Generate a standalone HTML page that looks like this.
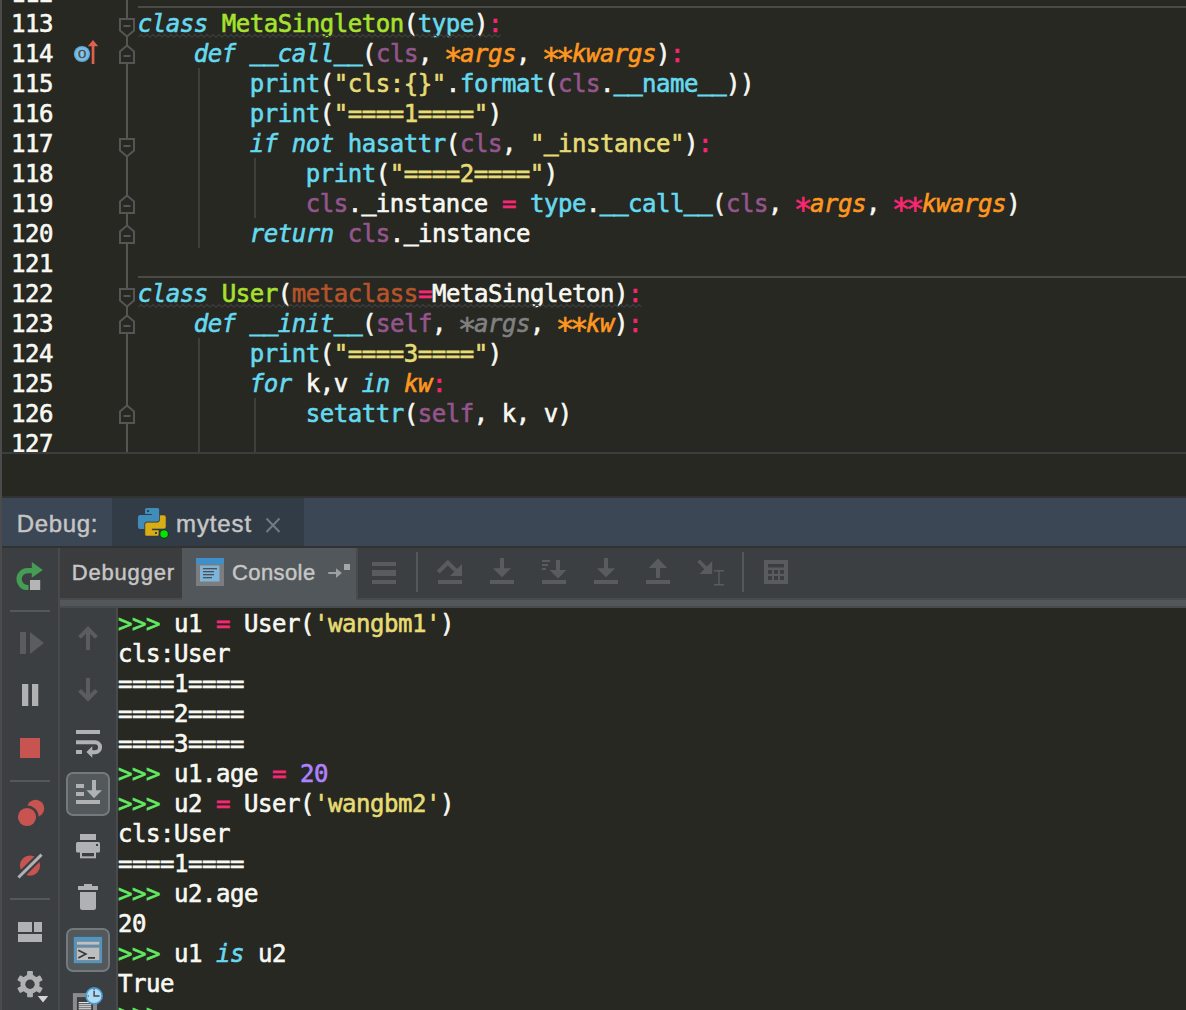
<!DOCTYPE html>
<html><head><meta charset="utf-8">
<style>
html,body{margin:0;padding:0;background:#272822;}
body{width:1186px;height:1010px;position:relative;overflow:hidden;font-family:"DejaVu Sans Mono","Liberation Mono",monospace;}
.abs{position:absolute;}
#editor{position:absolute;left:0;top:0;width:1186px;height:452px;background:#272822;overflow:hidden;}
.ln,.cl,.co{-webkit-text-stroke:0.6px;}
.ln,.cl{position:absolute;height:30px;line-height:30px;font-size:24px;letter-spacing:-0.4492px;white-space:pre;color:#f8f8f2;}
.ln{left:11px;}
.cl{left:137.8px;}
.k{color:#66d9ef;font-style:italic;}
.b{color:#66d9ef;}
.c{color:#a6e22e;}
.s{color:#94558d;}
.p{color:#fd971f;font-style:italic;}
.o{color:#f92672;}
.st{color:#e6db74;}
.n{color:#ae81ff;}
.m{color:#b5532b;}
.u{color:#808080;font-style:italic;}
.g{color:#62e862;}
.wave{}
.us{position:relative;top:-2.5px;-webkit-text-stroke:1.2px;}
.as{display:inline-block;transform-origin:7.2px 11px;transform:translateY(4.1px) scale(1.3);-webkit-text-stroke:0.45px;}

#console{position:absolute;left:118px;top:608px;width:1068px;height:402px;background:#272822;overflow:hidden;}
.co{position:absolute;left:0;height:30px;line-height:30px;font-size:24px;letter-spacing:-0.4492px;white-space:pre;color:#f8f8f2;}
.ui{font-family:"Liberation Sans","DejaVu Sans",sans-serif;color:#c6c6c6;position:absolute;white-space:pre;-webkit-text-stroke:0.45px;}
</style></head><body>
<div id="editor">
<div class="ln" style="top:-21px">112</div>
<div class="ln" style="top:9px">113</div>
<div class="cl" style="top:9px"><span class="wave"><span class="k">class</span> <span class="c">MetaSingleton</span>(<span class="b">type</span>)<span class="o">:</span></span></div>
<div class="ln" style="top:39px">114</div>
<div class="cl" style="top:39px">    <span class="k">def</span> <span class="k"><span class="us">__</span>call<span class="us">__</span></span>(<span class="s">cls</span>, <span class="p"><span class="as">*</span>args</span>, <span class="p"><span class="as">*</span><span class="as">*</span>kwargs</span>)<span class="o">:</span></div>
<div class="ln" style="top:69px">115</div>
<div class="cl" style="top:69px">        <span class="b">print</span>(<span class="st">&quot;cls:{}&quot;</span>.<span class="b">format</span>(<span class="s">cls</span>.<span class="b"><span class="us">__</span>name<span class="us">__</span></span>))</div>
<div class="ln" style="top:99px">116</div>
<div class="cl" style="top:99px">        <span class="b">print</span>(<span class="st">&quot;====1====&quot;</span>)</div>
<div class="ln" style="top:129px">117</div>
<div class="cl" style="top:129px">        <span class="k">if not</span> <span class="b">hasattr</span>(<span class="s">cls</span>, <span class="st">&quot;<span class="us">_</span>instance&quot;</span>)<span class="o">:</span></div>
<div class="ln" style="top:159px">118</div>
<div class="cl" style="top:159px">            <span class="b">print</span>(<span class="st">&quot;====2====&quot;</span>)</div>
<div class="ln" style="top:189px">119</div>
<div class="cl" style="top:189px">            <span class="s">cls</span>.<span class="us">_</span>instance <span class="o">=</span> <span class="b">type</span>.<span class="b"><span class="us">__</span>call<span class="us">__</span></span>(<span class="s">cls</span>, <span class="o"><span class="as">*</span></span><span class="p">args</span>, <span class="o"><span class="as">*</span><span class="as">*</span></span><span class="p">kwargs</span>)</div>
<div class="ln" style="top:219px">120</div>
<div class="cl" style="top:219px">        <span class="k">return</span> <span class="s">cls</span>.<span class="us">_</span>instance</div>
<div class="ln" style="top:249px">121</div>
<div class="ln" style="top:279px">122</div>
<div class="cl" style="top:279px"><span class="wave"><span class="k">class</span> <span class="c">User</span>(<span class="m">metaclass</span><span class="o">=</span>MetaSingleton)<span class="o">:</span></span></div>
<div class="ln" style="top:309px">123</div>
<div class="cl" style="top:309px">    <span class="k">def</span> <span class="k"><span class="us">__</span>init<span class="us">__</span></span>(<span class="s">self</span>, <span class="u"><span class="as">*</span>args</span>, <span class="p"><span class="as">*</span><span class="as">*</span>kw</span>)<span class="o">:</span></div>
<div class="ln" style="top:339px">124</div>
<div class="cl" style="top:339px">        <span class="b">print</span>(<span class="st">&quot;====3====&quot;</span>)</div>
<div class="ln" style="top:369px">125</div>
<div class="cl" style="top:369px">        <span class="k">for</span> k,v <span class="k">in</span> <span class="p">kw</span><span class="o">:</span></div>
<div class="ln" style="top:399px">126</div>
<div class="cl" style="top:399px">            <span class="b">setattr</span>(<span class="s">self</span>, k, v)</div>
<div class="ln" style="top:429px">127</div>
<div class="abs" style="left:138px;top:6px;width:1048px;height:2px;background:#4a4b48"></div>
<div class="abs" style="left:138px;top:276px;width:1048px;height:2px;background:#4a4b48"></div>
<div class="abs" style="left:126px;top:0;width:2px;height:452px;background:#55564f"></div>
<div class="abs" style="left:198px;top:68px;width:2px;height:180px;background:#403f3b"></div>
<div class="abs" style="left:254px;top:158px;width:2px;height:60px;background:#403f3b"></div>
<div class="abs" style="left:198px;top:338px;width:2px;height:114px;background:#403f3b"></div>
<div class="abs" style="left:254px;top:398px;width:2px;height:54px;background:#403f3b"></div>
<svg class="abs" style="left:138px;top:33px" width="364" height="6" viewBox="0 0 364 6"><polyline points="0,4.3 3,1.4 6,4.3 9,1.4 12,4.3 15,1.4 18,4.3 21,1.4 24,4.3 27,1.4 30,4.3 33,1.4 36,4.3 39,1.4 42,4.3 45,1.4 48,4.3 51,1.4 54,4.3 57,1.4 60,4.3 63,1.4 66,4.3 69,1.4 72,4.3 75,1.4 78,4.3 81,1.4 84,4.3 87,1.4 90,4.3 93,1.4 96,4.3 99,1.4 102,4.3 105,1.4 108,4.3 111,1.4 114,4.3 117,1.4 120,4.3 123,1.4 126,4.3 129,1.4 132,4.3 135,1.4 138,4.3 141,1.4 144,4.3 147,1.4 150,4.3 153,1.4 156,4.3 159,1.4 162,4.3 165,1.4 168,4.3 171,1.4 174,4.3 177,1.4 180,4.3 183,1.4 186,4.3 189,1.4 192,4.3 195,1.4 198,4.3 201,1.4 204,4.3 207,1.4 210,4.3 213,1.4 216,4.3 219,1.4 222,4.3 225,1.4 228,4.3 231,1.4 234,4.3 237,1.4 240,4.3 243,1.4 246,4.3 249,1.4 252,4.3 255,1.4 258,4.3 261,1.4 264,4.3 267,1.4 270,4.3 273,1.4 276,4.3 279,1.4 282,4.3 285,1.4 288,4.3 291,1.4 294,4.3 297,1.4 300,4.3 303,1.4 306,4.3 309,1.4 312,4.3 315,1.4 318,4.3 321,1.4 324,4.3 327,1.4 330,4.3 333,1.4 336,4.3 339,1.4 342,4.3 345,1.4 348,4.3 351,1.4 354,4.3 357,1.4 360,4.3 363,1.4" fill="none" stroke="#3a3b3c" stroke-width="1.25"/></svg>
<svg class="abs" style="left:138px;top:303px" width="504" height="6" viewBox="0 0 504 6"><polyline points="0,4.3 3,1.4 6,4.3 9,1.4 12,4.3 15,1.4 18,4.3 21,1.4 24,4.3 27,1.4 30,4.3 33,1.4 36,4.3 39,1.4 42,4.3 45,1.4 48,4.3 51,1.4 54,4.3 57,1.4 60,4.3 63,1.4 66,4.3 69,1.4 72,4.3 75,1.4 78,4.3 81,1.4 84,4.3 87,1.4 90,4.3 93,1.4 96,4.3 99,1.4 102,4.3 105,1.4 108,4.3 111,1.4 114,4.3 117,1.4 120,4.3 123,1.4 126,4.3 129,1.4 132,4.3 135,1.4 138,4.3 141,1.4 144,4.3 147,1.4 150,4.3 153,1.4 156,4.3 159,1.4 162,4.3 165,1.4 168,4.3 171,1.4 174,4.3 177,1.4 180,4.3 183,1.4 186,4.3 189,1.4 192,4.3 195,1.4 198,4.3 201,1.4 204,4.3 207,1.4 210,4.3 213,1.4 216,4.3 219,1.4 222,4.3 225,1.4 228,4.3 231,1.4 234,4.3 237,1.4 240,4.3 243,1.4 246,4.3 249,1.4 252,4.3 255,1.4 258,4.3 261,1.4 264,4.3 267,1.4 270,4.3 273,1.4 276,4.3 279,1.4 282,4.3 285,1.4 288,4.3 291,1.4 294,4.3 297,1.4 300,4.3 303,1.4 306,4.3 309,1.4 312,4.3 315,1.4 318,4.3 321,1.4 324,4.3 327,1.4 330,4.3 333,1.4 336,4.3 339,1.4 342,4.3 345,1.4 348,4.3 351,1.4 354,4.3 357,1.4 360,4.3 363,1.4 366,4.3 369,1.4 372,4.3 375,1.4 378,4.3 381,1.4 384,4.3 387,1.4 390,4.3 393,1.4 396,4.3 399,1.4 402,4.3 405,1.4 408,4.3 411,1.4 414,4.3 417,1.4 420,4.3 423,1.4 426,4.3 429,1.4 432,4.3 435,1.4 438,4.3 441,1.4 444,4.3 447,1.4 450,4.3 453,1.4 456,4.3 459,1.4 462,4.3 465,1.4 468,4.3 471,1.4 474,4.3 477,1.4 480,4.3 483,1.4 486,4.3 489,1.4 492,4.3 495,1.4 498,4.3 501,1.4 504,4.3" fill="none" stroke="#3a3b3c" stroke-width="1.25"/></svg>
</div>
<div class="abs" style="left:0;top:0;width:2px;height:1010px;background:#4b4b4b"></div>
<div class="abs" style="left:2px;top:452px;width:1184px;height:2px;background:#3b3d3f"></div>
<div class="abs" style="left:2px;top:496px;width:1184px;height:2px;background:#323232"></div>
<div class="abs" style="left:2px;top:498px;width:1184px;height:48px;background:#3c4756"></div>
<div class="abs" style="left:112px;top:498px;width:192px;height:48px;background:#323c47"></div>
<div class="abs" style="left:2px;top:546px;width:1184px;height:2px;background:#323232"></div>
<div class="abs" style="left:2px;top:548px;width:1184px;height:462px;background:#3c3f41"></div>
<div class="abs" style="left:58px;top:548px;width:2px;height:462px;background:#494a4b"></div>
<div class="abs" style="left:60px;top:548px;width:122px;height:50px;background:#3b3c3e"></div>
<div class="abs" style="left:60px;top:598px;width:1126px;height:2px;background:#494a4b"></div>
<div class="abs" style="left:60px;top:600px;width:1126px;height:6px;background:#51575a"></div>
<div class="abs" style="left:182px;top:548px;width:174px;height:52px;background:#51575a"></div>
<div class="abs" style="left:356px;top:548px;width:2px;height:50px;background:#494a4b"></div>
<div class="abs" style="left:60px;top:606px;width:1126px;height:2px;background:#494a4b"></div>
<div class="abs" style="left:116px;top:608px;width:2px;height:402px;background:#494a4b"></div>
<div class="ui" style="left:16.800px;top:508.500px;font-size:24px;line-height:30px;letter-spacing:0.650px">Debug:</div>
<div class="ui" style="left:176px;top:508.500px;font-size:24px;line-height:30px;letter-spacing:0.900px">mytest</div>
<div class="ui" style="left:71.800px;top:557.500px;font-size:22px;line-height:30px;letter-spacing:0.800px">Debugger</div>
<div class="ui" style="left:232px;top:557.700px;font-size:22px;line-height:30px;letter-spacing:0.400px">Console</div>

<div id="console">
<div class="co" style="top:1px"><span class="g">&gt;&gt;&gt;</span> u1 <span class="o">=</span> User(<span class="st">'wangbm1'</span>)</div>
<div class="co" style="top:31px">cls:User</div>
<div class="co" style="top:61px">====1====</div>
<div class="co" style="top:91px">====2====</div>
<div class="co" style="top:121px">====3====</div>
<div class="co" style="top:151px"><span class="g">&gt;&gt;&gt;</span> u1.age <span class="o">=</span> <span class="n">20</span></div>
<div class="co" style="top:181px"><span class="g">&gt;&gt;&gt;</span> u2 <span class="o">=</span> User(<span class="st">'wangbm2'</span>)</div>
<div class="co" style="top:211px">cls:User</div>
<div class="co" style="top:241px">====1====</div>
<div class="co" style="top:271px"><span class="g">&gt;&gt;&gt;</span> u2.age</div>
<div class="co" style="top:301px">20</div>
<div class="co" style="top:331px"><span class="g">&gt;&gt;&gt;</span> u1 <span class="k">is</span> u2</div>
<div class="co" style="top:361px">True</div>
<div class="co" style="top:391px"><span class="g">&gt;&gt;&gt;</span></div>
</div>
<svg class="abs" style="left:0;top:0" width="1186" height="1010" viewBox="0 0 1186 1010">
<defs>
<radialGradient id="og" cx="50%" cy="50%" r="50%"><stop offset="0" stop-color="#8accf0"/><stop offset="0.7" stop-color="#79bde6"/><stop offset="1" stop-color="#5a9fd0"/></radialGradient>
</defs>
<!-- fold markers -->
<g fill="#272822" stroke="#555555" stroke-width="2">
<path d="M120 19H134V30.5L127 36.5L120 30.5Z"/>
<path d="M127 45.5L134 51.5V63H120V51.5Z"/>
<path d="M120 139H134V150.5L127 156.5L120 150.5Z"/>
<path d="M127 195.5L134 201.5V213H120V201.5Z"/>
<path d="M127 225.5L134 231.5V243H120V231.5Z"/>
<path d="M120 289H134V300.5L127 306.5L120 300.5Z"/>
<path d="M127 315.5L134 321.5V333H120V321.5Z"/>
<path d="M127 405.5L134 411.5V423H120V411.5Z"/>
</g>
<g fill="#555555">
<rect x="123.5" y="25" width="7" height="2"/><rect x="123.5" y="55" width="7" height="2"/>
<rect x="123.5" y="145" width="7" height="2"/><rect x="123.5" y="205" width="7" height="2"/>
<rect x="123.5" y="235" width="7" height="2"/><rect x="123.5" y="295" width="7" height="2"/>
<rect x="123.5" y="325" width="7" height="2"/><rect x="123.5" y="415" width="7" height="2"/>
</g>
<!-- override gutter icon -->
<circle cx="82" cy="54" r="8.1" fill="url(#og)"/>
<text x="82" y="58.200" text-anchor="middle" font-family="Liberation Serif,serif" font-size="17.500" fill="#4d4f52" stroke="#4d4f52" stroke-width="0.300">o</text>
<path d="M93 40L98.2 46.2H94.4V64H91.7V46.2H87.8Z" fill="#e0604f"/>
<!-- python icon -->
<g transform="translate(132 502) scale(0.03962)">
<path id="pyh" d="M330 190Q330 150 370 150H645Q685 150 685 190V440Q685 500 625 500H370Q315 500 315 555V680H205Q150 680 150 625V385Q150 330 205 330H500V306H330Z" fill="#408db9"/>
<path d="M330 190Q330 150 370 150H645Q685 150 685 190V440Q685 500 625 500H370Q315 500 315 555V680H205Q150 680 150 625V385Q150 330 205 330H500V306H330Z" fill="#d9ad15" stroke="#2a3440" stroke-width="14" transform="rotate(180 505 505)"/>
<rect x="380" y="205" width="50" height="46" fill="#2f3942"/>
<rect x="580" y="759" width="50" height="46" fill="#2f3942"/>
<circle cx="812" cy="812" r="112" fill="#1c2a1c"/>
<circle cx="810" cy="808" r="96" fill="#00e600"/>
</g>
<!-- tab close x -->
<path d="M266.500 518.500L279.500 532M279.500 518.500L266.500 532" stroke="#717b86" stroke-width="2" fill="none"/>
<!-- console tab icon -->
<rect x="196" y="558" width="28" height="28" fill="#7b7d7f"/>
<rect x="196" y="558" width="28" height="6" fill="#3f8fcb"/>
<rect x="200" y="565.500" width="19.500" height="16" fill="#7db4da"/>
<g fill="#4b5157"><rect x="203" y="568" width="14" height="1.300"/><rect x="203" y="571" width="11" height="1.300"/><rect x="203" y="574" width="11" height="1.300"/><rect x="203" y="577" width="9" height="1.300"/></g>
<!-- pin -->
<path d="M328.300 571.900H336V568.200L341.900 573L336 577.900V574.100H328.300Z" fill="#9d9fa0"/>
<rect x="344" y="564" width="6" height="6" fill="#a4a6a8"/>
<!-- toolbar (disabled) icons -->
<g fill="#5a5b5c">
<rect x="372" y="562" width="24" height="4"/><rect x="372" y="570" width="24" height="6"/><rect x="372" y="580" width="24" height="4"/>
<rect x="416" y="552" width="2" height="40" fill="#555759"/>
<rect x="742" y="552" width="2" height="40" fill="#555759"/>
<!-- show exec point -->
<rect x="438" y="580" width="24" height="4"/>
<path d="M438.300 572L447.800 562.500L457.500 572.200" fill="none" stroke="#5a5b5c" stroke-width="4"/>
<path d="M462 564V576H450Z"/>
<!-- step into -->
<rect x="490" y="580" width="24" height="4"/>
<path d="M500 558H504V568.200H511.200L502 577.200L492.800 568.200H500Z"/>
<!-- step into my code -->
<rect x="542" y="580" width="24" height="4"/>
<path d="M556 560H560V570H566.500L558 578.400L549.500 570H556Z"/>
<rect x="542" y="560" width="8" height="2"/><rect x="542" y="564" width="6" height="2"/><rect x="542" y="568" width="4" height="2"/>
<!-- force step into -->
<rect x="594" y="580" width="24" height="4"/>
<path d="M604 558H608V568.200H615.200L606 577.200L596.800 568.200H604Z"/>
<!-- step out -->
<rect x="646" y="580" width="24" height="4"/>
<path d="M658 558.600L667.300 568H660V578H656V568H648.700Z"/>
<!-- run to cursor -->
<path d="M698.500 560.800L708 570.300" fill="none" stroke="#5a5b5c" stroke-width="3.600"/>
<path d="M712.200 561.300V574H699.500Z"/>
<path d="M714 570.700H724M714 584.800H724M719 570.700V584.800" stroke="#5a5b5c" stroke-width="1.500" fill="none"/>
<!-- calculator -->
<path fill-rule="evenodd" d="M764 560H788V584H764ZM768 564V567.600H784V564ZM768 570V573.700H772V570ZM774 570V573.700H778V570ZM780 570V573.700H784V570ZM768 576V580H772V576ZM774 576V580H778V576ZM780 576V580H784V576Z"/>
</g>
<!-- left column -->
<g fill="#555759"><rect x="10" y="610" width="40" height="2"/><rect x="10" y="780" width="40" height="2"/><rect x="10" y="898" width="40" height="2"/></g>
<!-- rerun -->
<path d="M32 570.700H27.500A8.400 8.400 0 0 0 27.500 587.500H28.500" fill="none" stroke="#459d55" stroke-width="5.200"/>
<path d="M31.800 562L42.800 570L31.800 577.800Z" fill="#459d55"/>
<rect x="30" y="580" width="10.200" height="10" fill="#b4b5b6"/>
<!-- resume (disabled) -->
<rect x="20" y="632" width="6" height="22" fill="#5a5c5e"/><path d="M30 632L44 643L30 654Z" fill="#5a5c5e"/>
<!-- pause -->
<rect x="22" y="684" width="6.300" height="22" fill="#afb1b3"/><rect x="32" y="684" width="6.300" height="22" fill="#afb1b3"/>
<!-- stop -->
<rect x="20" y="738" width="20" height="20" fill="#c75450"/>
<!-- breakpoints -->
<circle cx="35.600" cy="808.300" r="8.600" fill="#c75450"/>
<circle cx="27" cy="817" r="11.600" fill="#3c3f41"/>
<circle cx="27" cy="817" r="9.100" fill="#c75450"/>
<!-- mute breakpoints -->
<circle cx="30" cy="865.600" r="10.100" fill="#c75450"/>
<path d="M18.400 877.500L41.600 854.600" stroke="#3c3f41" stroke-width="7.500"/>
<path d="M18.400 877.500L41.600 854.600" stroke="#afb1b3" stroke-width="3"/>
<!-- layout -->
<g fill="#afb1b3"><rect x="18" y="922" width="14" height="10"/><rect x="34" y="922" width="8" height="10"/><rect x="18" y="934" width="24" height="8"/></g>
<!-- gear -->
<g transform="translate(30 984.200)" fill="#afb1b3">
<circle r="9.600"/>
<g id="tooth"><rect x="-2.900" y="-13.100" width="5.800" height="6" rx="0.800"/></g>
<use href="#tooth" transform="rotate(60)"/><use href="#tooth" transform="rotate(120)"/><use href="#tooth" transform="rotate(180)"/><use href="#tooth" transform="rotate(240)"/><use href="#tooth" transform="rotate(300)"/>
<circle r="4.700" fill="#3c3f41"/>
</g>
<path d="M37.800 996H48.200L43 1002.400Z" fill="#d4d4d4"/>
<!-- console toolbar column -->
<g fill="none" stroke="#5a5c5e" stroke-width="4">
<path d="M88 650V630M79.600 637.400L88 628.800L96.400 637.400"/>
<path d="M88 678V698M79.600 690.400L88 699L96.400 690.400"/>
</g>
<!-- soft wrap -->
<g fill="#afb1b3"><rect x="76" y="730" width="24" height="4"/><rect x="76" y="750" width="6" height="4"/></g>
<path d="M76 742.200H95A5 5 0 0 1 95 752.300H91" fill="none" stroke="#afb1b3" stroke-width="4"/>
<path d="M86.400 752L92.300 746.300V757.800Z" fill="#afb1b3"/>
<!-- selected: scroll to end -->
<rect x="67" y="773" width="42" height="42" rx="6" fill="#53585b" stroke="#73797c" stroke-width="2"/>
<g fill="#afb1b3"><rect x="76" y="784" width="8" height="4"/><rect x="76" y="792" width="8" height="4"/><rect x="76" y="800" width="24" height="4"/>
<path d="M92 780H96V790.200H102L94 798.300L86.500 790.200H92Z"/></g>
<!-- print -->
<g fill="#afb1b3"><rect x="80" y="834" width="16" height="6"/><rect x="76" y="842" width="24" height="10.500" rx="1.500"/></g>
<rect x="81" y="852" width="14" height="5.300" fill="#3c3f41" stroke="#afb1b3" stroke-width="2"/>
<rect x="96" y="844" width="2" height="2" fill="#3c3f41"/>
<!-- trash -->
<g fill="#afb1b3"><rect x="84" y="884" width="8" height="3"/><rect x="78" y="886" width="20" height="4"/><path d="M80 892H96V907.500A2.500 2.500 0 0 1 93.500 910H82.500A2.500 2.500 0 0 1 80 907.500Z"/></g>
<!-- selected: console -->
<rect x="67" y="929" width="42" height="42" rx="6" fill="#53585b" stroke="#73797c" stroke-width="2"/>
<rect x="73.800" y="936.900" width="28.300" height="26.300" fill="#4e96c4"/>
<rect x="76.400" y="941.300" width="23.400" height="3.700" fill="#c0c1c2" stroke="#7f8284" stroke-width="0.800"/>
<rect x="76.400" y="947.200" width="23.400" height="13.400" fill="#bdbebf" stroke="#7f8284" stroke-width="0.800"/>
<path d="M78.300 950.300L85.800 954.100L78.300 957.900M88 957.800H95" fill="none" stroke="#38393a" stroke-width="1.700"/>
<!-- history -->
<rect x="74.900" y="995.100" width="20.100" height="20" fill="#3c3f41" stroke="#8a8c8e" stroke-width="4"/>
<g fill="#e6e6e6"><rect x="78.700" y="1002" width="12.500" height="1.200"/><rect x="78.700" y="1004.200" width="12.500" height="1.200"/><rect x="78.700" y="1006.200" width="12.500" height="1.200"/><rect x="78.700" y="1008.200" width="12.500" height="1.200"/></g>
<circle cx="94.100" cy="995.900" r="8" fill="#aedcf7" stroke="#4b9ad0" stroke-width="1.600"/>
<path d="M94.100 990.800V996H99.600" fill="none" stroke="#45484a" stroke-width="1.500"/>
<rect x="93.500" y="988.700" width="1.200" height="1.200" fill="#45484a"/><rect x="87.600" y="995.400" width="1.200" height="1.200" fill="#45484a"/>
</svg>

</body></html>
